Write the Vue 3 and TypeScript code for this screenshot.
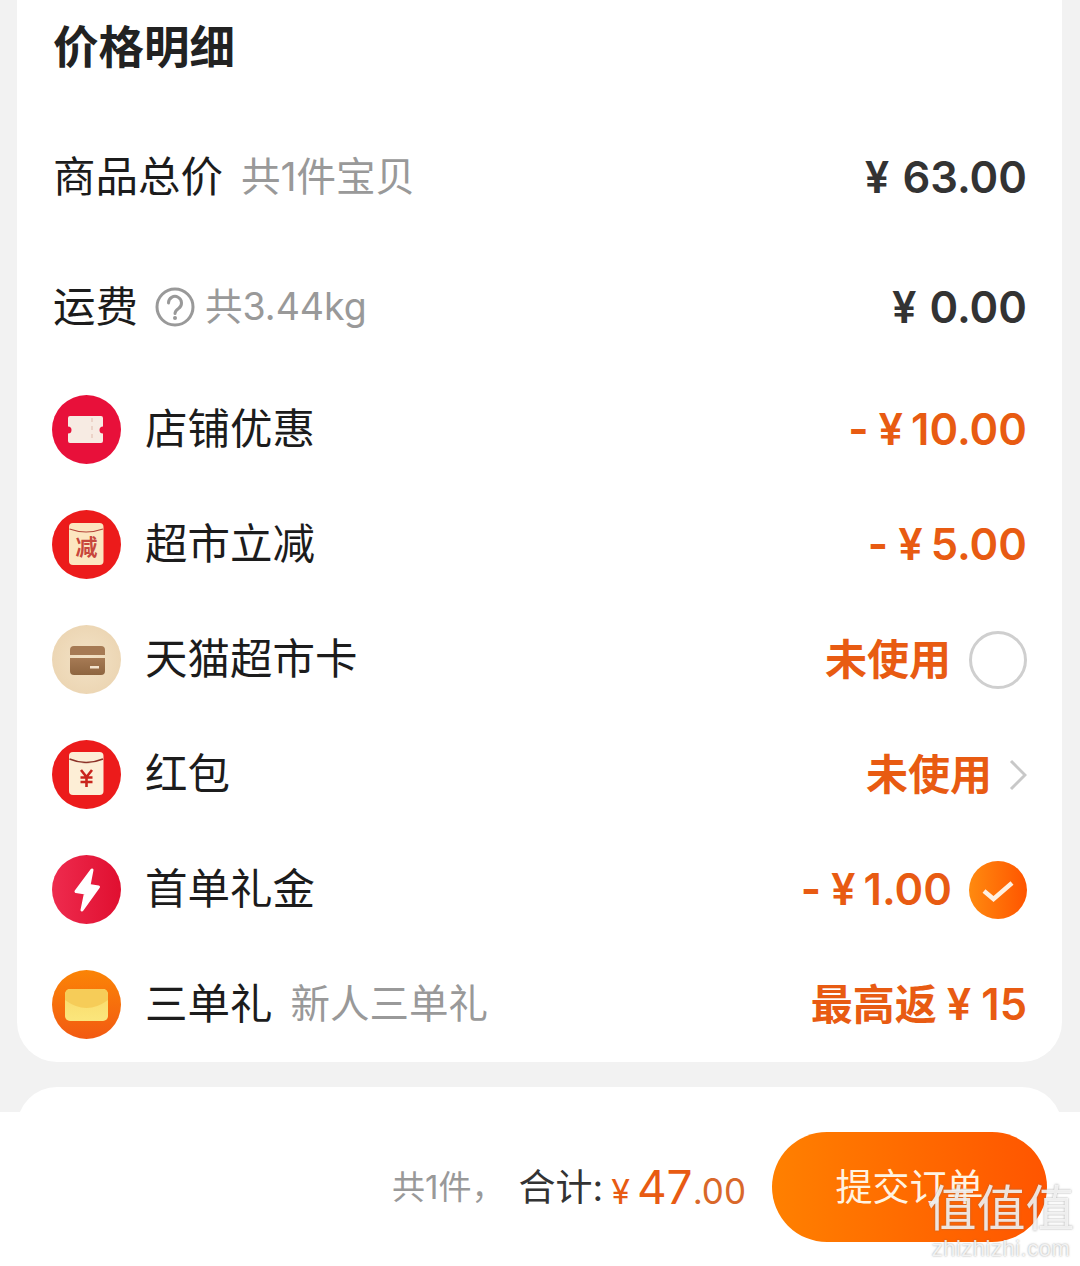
<script setup lang="ts">
interface Row {
  label: string
  sub?: string
  pre?: string
  num?: string
  icon: string
  end?: 'circle' | 'chevron' | 'check'
}
const rows: Row[] = [
  { label: '店铺优惠', pre: '-', num: '10.00', icon: 'ticket' },
  { label: '超市立减', pre: '-', num: '5.00', icon: 'jian' },
  { label: '天猫超市卡', pre: '未使用', icon: 'card', end: 'circle' },
  { label: '红包', pre: '未使用', icon: 'packet', end: 'chevron' },
  { label: '首单礼金', pre: '-', num: '1.00', icon: 'bolt', end: 'check' },
  { label: '三单礼', sub: '新人三单礼', pre: '最高返', num: '15', icon: 'mail' }
]
</script>

<template>
  <div class="page">
    <section class="card">
      <h2 class="title">价格明细</h2>
      <div class="plain first">
        <div class="left"><span class="label">商品总价</span><span class="sub lift">共1件宝贝</span></div>
        <span class="price"><span class="yen wide">¥</span>63.00</span>
      </div>
      <div class="plain second">
        <div class="left">
          <span class="label">运费</span>
          <svg class="help" viewBox="0 0 40 40" width="40" height="40">
            <circle cx="20" cy="20" r="18" fill="none" stroke="#999" stroke-width="3" />
            <path d="M13.5 16a6.5 6.5 0 1 1 10 5.4c-2.2 1.500-3.500 2.600-3.500 5.100" fill="none" stroke="#999" stroke-width="3" stroke-linecap="round" />
            <circle cx="20" cy="31" r="2" fill="#999" />
          </svg>
          <span class="sub tight lift">共3.44kg</span>
        </div>
        <span class="price"><span class="yen wide">¥</span>0.00</span>
      </div>
      <div v-for="r in rows" :key="r.label" class="row">
        <svg class="icon" viewBox="0 0 69 69" width="69" height="69">
          <defs>
            <linearGradient id="boltG" x1="0" x2="1" y1="0" y2="0"><stop offset="0" stop-color="#ee2b4e" /><stop offset="1" stop-color="#e00f30" /></linearGradient>
            <linearGradient id="mailG" x1="0" x2="0" y1="0" y2="1"><stop offset="0" stop-color="#fb8406" /><stop offset="1" stop-color="#f25a12" /></linearGradient>
            <linearGradient id="mailF" x1="0" x2="0" y1="0" y2="1"><stop offset="0" stop-color="#f9d868" /><stop offset="1" stop-color="#fbe67c" /></linearGradient>
            <linearGradient id="cardB" x1="0" x2="0" y1="0" y2="1"><stop offset="0" stop-color="#a67a54" /><stop offset="1" stop-color="#8e6540" /></linearGradient>
            <radialGradient id="cardG"><stop offset="0" stop-color="#f3e2c6" /><stop offset="1" stop-color="#ecd6b4" /></radialGradient>
          </defs>
          <template v-if="r.icon === 'ticket'">
            <circle cx="34.500" cy="34.500" r="34.500" fill="#e8103a" />
            <path d="M18 21h31a2 2 0 0 1 2 2v8.500a3.500 3.500 0 0 0 0 7V46a2 2 0 0 1-2 2H18a2 2 0 0 1-2-2v-7.500a3.500 3.500 0 0 0 0-7V23a2 2 0 0 1 2-2z" fill="#f7ebe3" />
            <path d="M40 23v23" stroke="#ecd3c8" stroke-width="2" stroke-dasharray="4 4" />
          </template>
          <template v-else-if="r.icon === 'jian'">
            <circle cx="34.500" cy="34.500" r="34.500" fill="#ec1b1b" />
            <rect x="17" y="13" width="34.500" height="42" rx="4" fill="#fce6c0" />
            <path d="M17.500 19q16.500 6 33.500 0" fill="none" stroke="#b5453a" stroke-width="1.200" />
            <text x="34.500" y="45" text-anchor="middle" class="jian">减</text>
          </template>
          <template v-else-if="r.icon === 'card'">
            <circle cx="34.500" cy="34.500" r="34.500" fill="url(#cardG)" />
            <path d="M18 25a4 4 0 0 1 4-4h27a4 4 0 0 1 4 4v5H18z" fill="#a67a54" />
            <path d="M18 33h35v13a4 4 0 0 1-4 4H22a4 4 0 0 1-4-4z" fill="url(#cardB)" />
            <rect x="38" y="41" width="9" height="2.500" fill="#f3e3cd" />
          </template>
          <template v-else-if="r.icon === 'packet'">
            <circle cx="34.500" cy="34.500" r="34.500" fill="#ec1b1b" />
            <rect x="17" y="12" width="34.500" height="43" rx="4" fill="#fdeed6" />
            <path d="M17.500 19q16.500 7 33.500 0" fill="none" stroke="#8c3228" stroke-width="1.500" />
            <path d="M29 30l5.500 7 5.500-7M34.500 37v10M28.500 37.500h12M28.500 42h12" fill="none" stroke="#c9241c" stroke-width="2.600" />
          </template>
          <template v-else-if="r.icon === 'bolt'">
            <circle cx="34.500" cy="34.500" r="34.500" fill="url(#boltG)" />
            <path d="M40 15L24 36.500l9.500 1.500L30 55l16.500-23L37 30.500z" fill="#fff" stroke="#fff" stroke-width="3" stroke-linejoin="round" />
          </template>
          <template v-else>
            <circle cx="34.500" cy="34.500" r="34.500" fill="url(#mailG)" />
            <rect x="13" y="19" width="43" height="32" rx="5" fill="url(#mailF)" />
            <path d="M13 27q0-8 5-8h33q5 0 5 8v3q-11 8-21.500 8T13 30z" fill="#f6cc58" />
          </template>
        </svg>
        <span class="label shift">{{ r.label }}</span>
        <span v-if="r.sub" class="sub lift">{{ r.sub }}</span>
        <span class="value shift">
          <span v-if="r.pre" :class="r.pre === '-' ? 'dash' : 'cn'">{{ r.pre }}</span><template v-if="r.num"><span class="yen" :class="{ roomy: r.pre !== '-' }">¥</span>{{ r.num }}</template>
        </span>
        <span v-if="r.end === 'circle'" class="radio"></span>
        <svg v-else-if="r.end === 'chevron'" class="chev" viewBox="0 0 18 32" width="18" height="32">
          <path d="M2 2l14 14L2 30" fill="none" stroke="#c8c8c8" stroke-width="3" />
        </svg>
        <svg v-else-if="r.end === 'check'" class="checked" viewBox="0 0 58 58" width="58" height="58">
          <defs><linearGradient id="chk" x1="0" x2="1" y1="0" y2="0"><stop offset="0" stop-color="#ff8a0f" /><stop offset="1" stop-color="#ff5500" /></linearGradient></defs>
          <circle cx="29" cy="29" r="29" fill="url(#chk)" />
          <path d="M15 30l9.500 8L43 22" fill="none" stroke="#fff0e0" stroke-width="4.500" />
        </svg>
      </div>
    </section>
    <section class="next"></section>
    <footer class="foot">
      <span class="count">共1件，</span>
      <span class="sum">合计:</span>
      <span class="total"><span class="cny">¥</span><span class="big">47</span><span class="dec">.00</span></span>
      <button class="submit"><span class="submit-text">提交订单</span></button>
    </footer>
    <div class="mark">
      <span class="mark-cn">值值值</span>
      <span class="mark-en">zhizhizhi.com</span>
    </div>
  </div>
</template>

<style>
html, body { margin: 0; padding: 0; }
</style>

<style scoped>
.page {
  position: relative;
  width: 1080px;
  height: 1266px;
  overflow: hidden;
  background: #f2f2f2;
  display: flex;
  flex-direction: column;
  font-family: Inter, "Noto Sans CJK SC", sans-serif;
  color: #1c1c1c;
}
.card {
  flex: none;
  box-sizing: border-box;
  width: 1045px;
  height: 1102px;
  margin: -40px 0 0 17px;
  padding: 40px 35px 0 37px;
  background: #fff;
  border-radius: 40px;
}
.title {
  margin: 0 0 0 -1px;
  height: 96px;
  font-size: 45.500px;
  line-height: 96px;
  font-weight: 700;
  color: #222;
}
.plain { display: flex; align-items: center; justify-content: space-between; }
.first { height: 70px; margin-top: 46px; }
.second { height: 72px; margin-top: 59px; }
.left { display: flex; align-items: center; margin-left: -1px; }
.label { font-size: 42.500px; line-height: 60px; white-space: nowrap; }
.sub { font-size: 39.500px; color: #999; margin-left: 18px; white-space: nowrap; }
.lift { margin-bottom: 8px; }
.tight { margin-left: 10px; font-size: 37.500px; }
.help { margin-left: 17px; }
.price {
  font-size: 43.500px;
  font-weight: 600;
  color: #333;
  white-space: nowrap;
  display: flex;
  align-items: center;
}
.yen { font-size: 43.500px; margin-left: 10px; margin-right: 8px; }
.yen.wide { margin: 0 13px 0 0; }
.yen.roomy { margin-left: 10px; margin-right: 10px; }
.row {
  display: flex;
  align-items: center;
  height: 115px;
  margin-left: -2px;
}
.plain + .row { margin-top: 29px; }
.icon { flex: none; margin-right: 24px; }
.jian { font-size: 22px; font-weight: 700; fill: #c8473c; font-family: "Noto Sans CJK SC", sans-serif; }
.shift { margin-bottom: 2px; }
.value {
  margin-left: auto;
  font-size: 43.500px;
  font-weight: 600;
  color: #e85b12;
  white-space: nowrap;
  display: flex;
  align-items: center;
}
.dash { font-weight: 700; }
.cn { font-size: 42px; margin-bottom: 5px; }
.radio {
  flex: none;
  box-sizing: border-box;
  width: 58px;
  height: 58px;
  margin-left: 18px;
  border: 3px solid #cfcfcf;
  border-radius: 50%;
}
.chev { flex: none; margin-left: 17px; }
.checked { flex: none; margin-left: 17px; }
.next {
  flex: none;
  width: 1045px;
  height: 80px;
  margin: 25px 0 0 17px;
  background: #fff;
  border-radius: 40px 40px 0 0;
}
.foot {
  position: absolute;
  left: 0;
  right: 0;
  bottom: 0;
  height: 154px;
  box-sizing: border-box;
  padding: 0 33px 5px 0;
  background: #fff;
  display: flex;
  align-items: center;
  justify-content: flex-end;
}
.count { font-size: 33px; color: #999; white-space: nowrap; margin: 0 14px 4px 0; }
.sum { font-size: 37px; color: #333; white-space: nowrap; margin-bottom: 4px; }
.total {
  display: flex;
  align-items: baseline;
  margin-left: 8px;
  color: #e85b12;
}
.cny { font-size: 34px; margin-right: 7px; }
.big { font-size: 46px; }
.dec { font-size: 35px; color: #d9682a; }
.submit {
  flex: none;
  width: 275px;
  height: 110px;
  margin-left: 26px;
  border: 0;
  border-radius: 55px;
  background: linear-gradient(90deg, #ff8000, #ff5500);
  color: #fff3e2;
  font-family: "Noto Sans CJK SC", sans-serif;
  font-size: 37px;
  padding: 0 0 4px;
}
.submit-text { display: block; }
.mark {
  position: absolute;
  left: 928px;
  top: 1182px;
  width: 146px;
  display: flex;
  flex-direction: column;
  align-items: center;
  color: rgba(255, 255, 255, 0.82);
  text-shadow: 0 0 2px rgba(110, 110, 110, 0.7);
  pointer-events: none;
}
.mark-cn { font-size: 49px; line-height: 54px; font-weight: 400; white-space: nowrap; }
.mark-en { font-family: "Liberation Sans", sans-serif; font-size: 22px; line-height: 26px; letter-spacing: 0.5px; white-space: nowrap; }
</style>
